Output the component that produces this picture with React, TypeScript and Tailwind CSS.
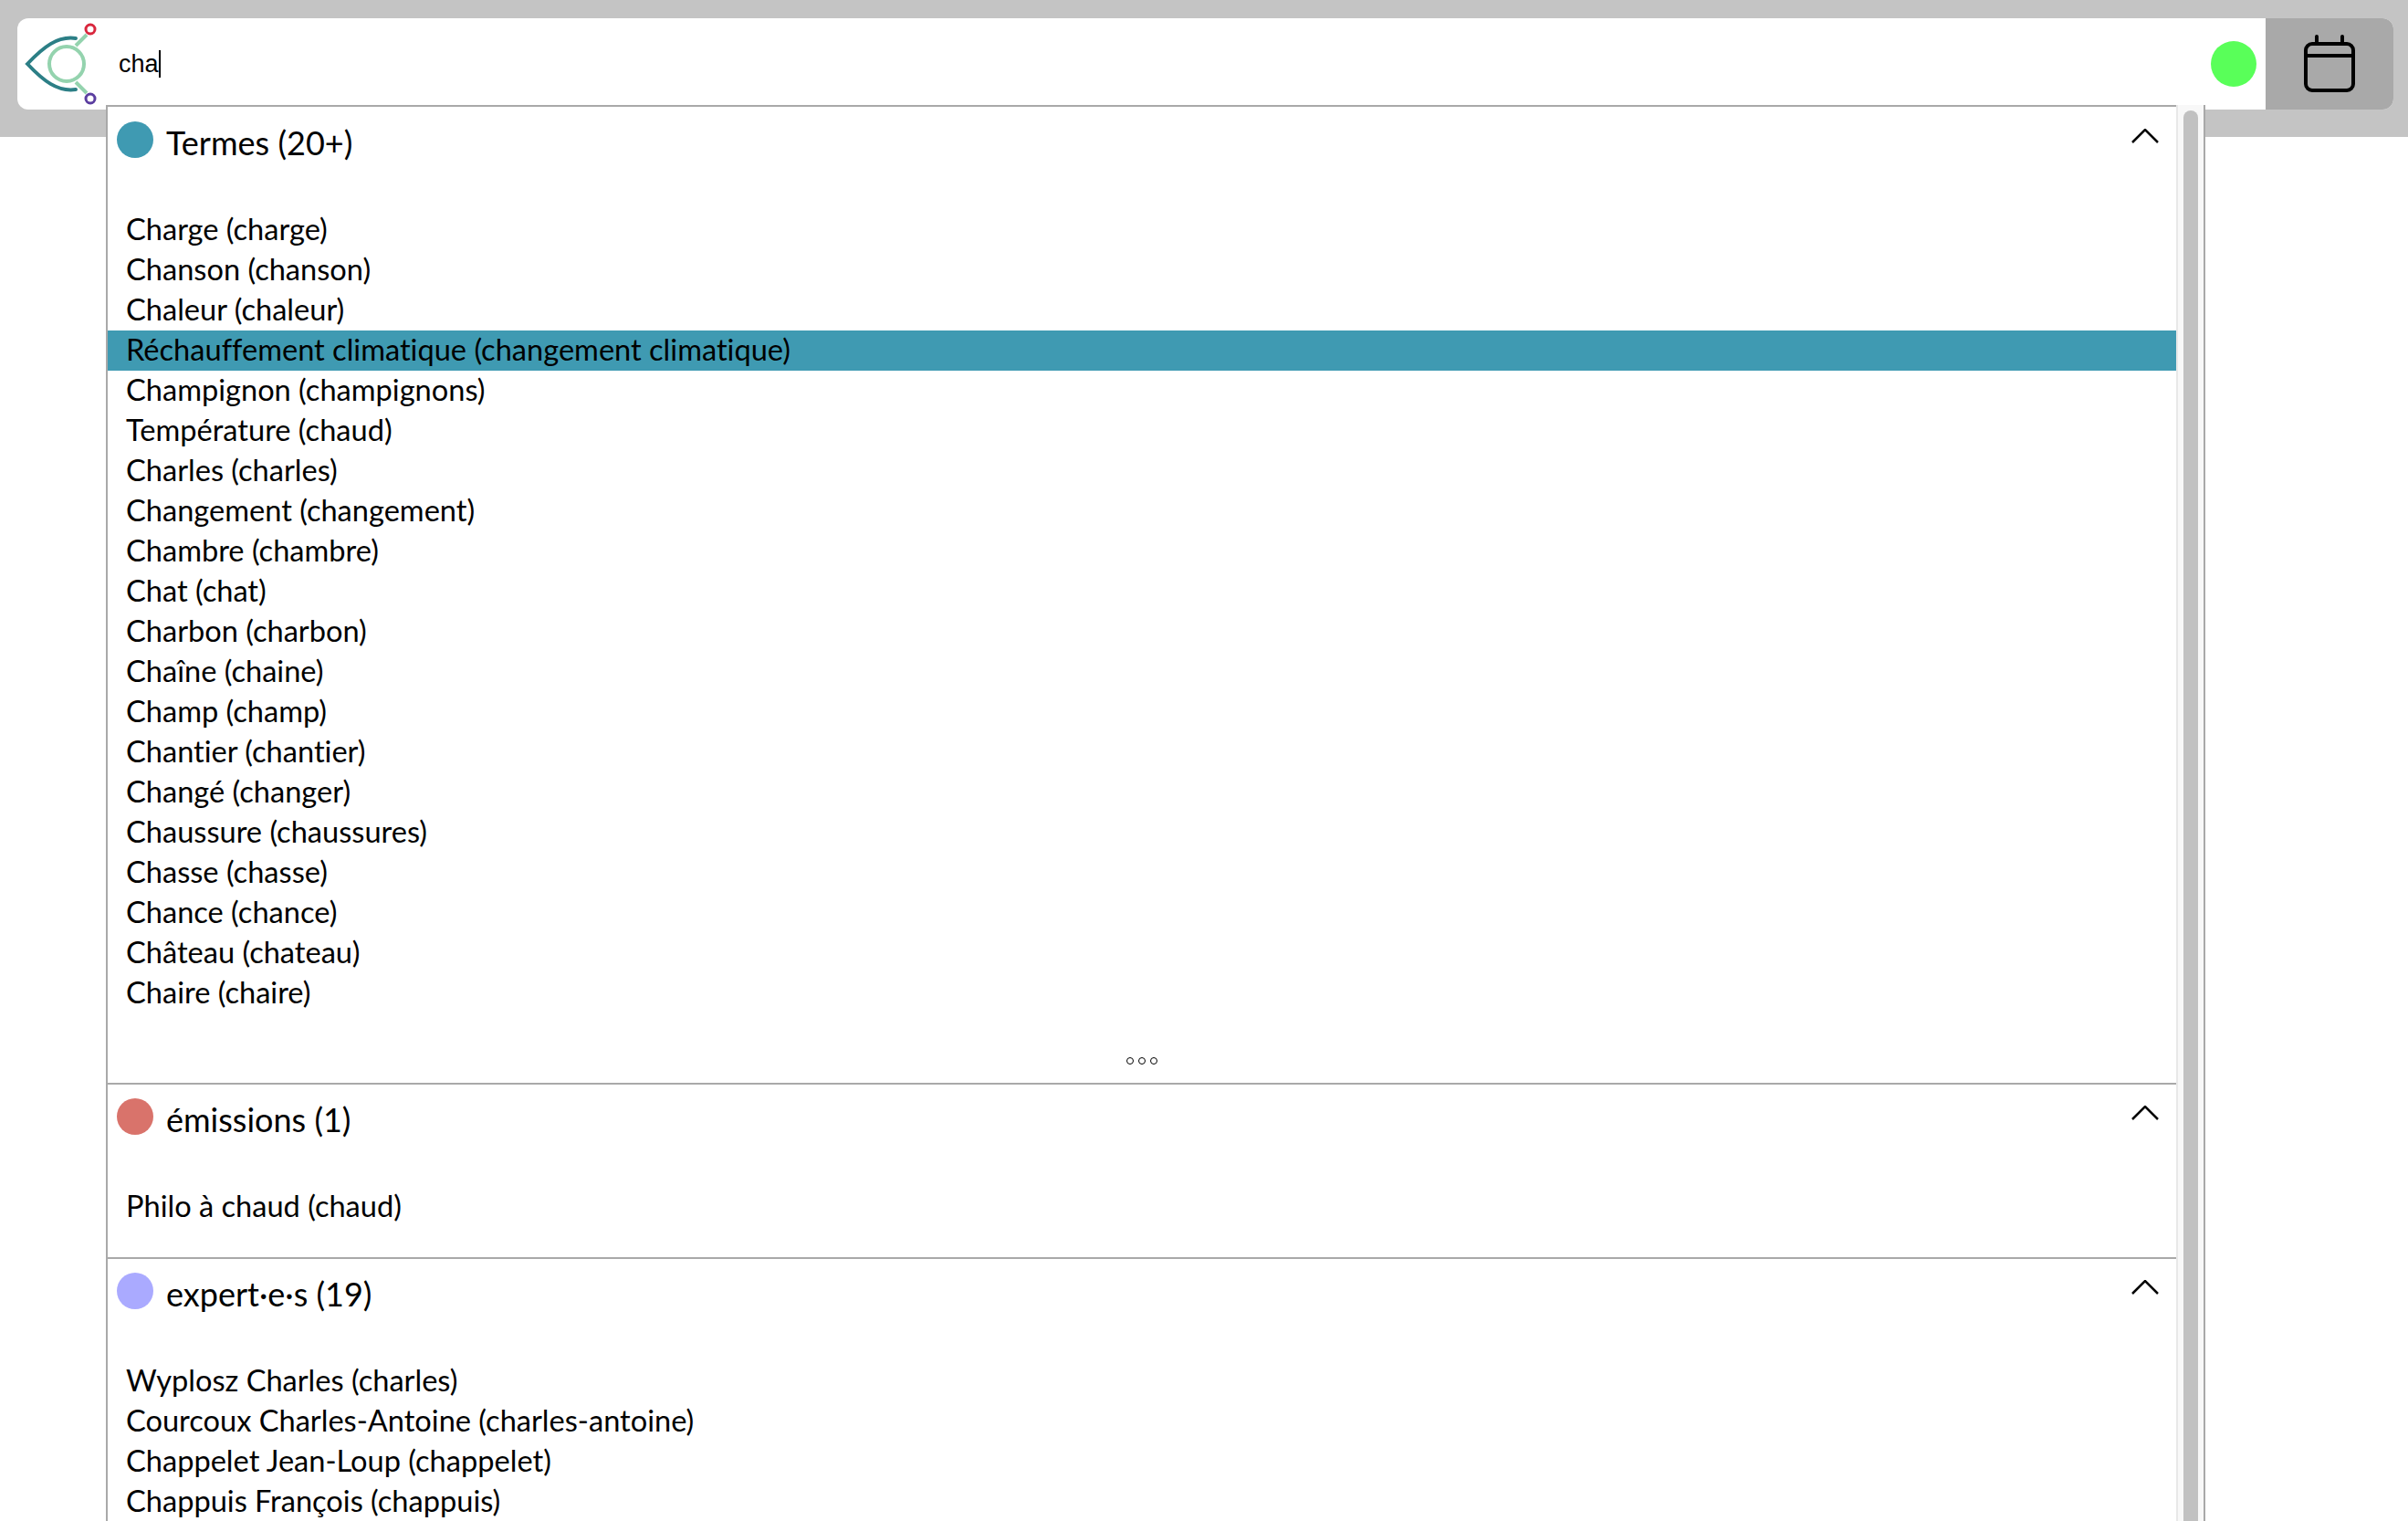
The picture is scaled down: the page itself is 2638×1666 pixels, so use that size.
const termes = [
  "Charge (charge)",
  "Chanson (chanson)",
  "Chaleur (chaleur)",
  "Réchauffement climatique (changement climatique)",
  "Champignon (champignons)",
  "Température (chaud)",
  "Charles (charles)",
  "Changement (changement)",
  "Chambre (chambre)",
  "Chat (chat)",
  "Charbon (charbon)",
  "Chaîne (chaine)",
  "Champ (champ)",
  "Chantier (chantier)",
  "Changé (changer)",
  "Chaussure (chaussures)",
  "Chasse (chasse)",
  "Chance (chance)",
  "Château (chateau)",
  "Chaire (chaire)",
];

const experts = [
  "Wyplosz Charles (charles)",
  "Courcoux Charles-Antoine (charles-antoine)",
  "Chappelet Jean-Loup (chappelet)",
  "Chappuis François (chappuis)",
];

function Logo() {
  return (
    <svg width="100" height="100" viewBox="0 0 100 100" fill="none" className="shrink-0">
      <path d="M64 22 C44 19 28 32 11 50 C28 68 44 81 64 78" stroke="#2c7f86" strokeWidth="4" strokeLinecap="round" />
      <path d="M64 30 L76 18 M64 70 L76 82" stroke="#94d3ae" strokeWidth="4" />
      <circle cx="54" cy="50" r="19" stroke="#94d3ae" strokeWidth="4" />
      <circle cx="80" cy="12" r="5" stroke="#d9273d" strokeWidth="3" fill="#fff" />
      <circle cx="80" cy="88" r="5" stroke="#5b3ea0" strokeWidth="3" fill="#fff" />
    </svg>
  );
}

function Chevron() {
  return (
    <svg width="30" height="16" viewBox="0 0 30 16" fill="none" className="mt-[23px] mr-[19px]">
      <path d="M1 15 L15 1 L29 15" stroke="#000" strokeWidth="2.5" />
    </svg>
  );
}

function Header({ color, label }: { color: string; label: string }) {
  return (
    <div className="flex h-[112px] items-start justify-between pl-[10px]">
      <div className="flex items-start gap-[14px] pt-[15px]">
        <div className={`h-[40px] w-[40px] rounded-full ${color}`} />
        <span className="text-[36px] leading-[47px]">{label}</span>
      </div>
      <Chevron />
    </div>
  );
}

function Row({ label, active }: { label: string; active?: boolean }) {
  return (
    <div className={`h-[44px] pl-[20px] text-[32.6px] leading-[42px] ${active ? "bg-[#3f9ab2]" : ""}`}>
      {label}
    </div>
  );
}

export default function App() {
  return (
    <div className="relative h-[1666px] overflow-hidden bg-white">
      {/* Barre du haut */}
      <div className="h-[150px] bg-[#c4c4c4] pt-[20px] pr-[16px] pl-[19px]">
        <div className="flex h-[100px] overflow-hidden rounded-[12px] bg-white">
          <div className="flex flex-1 items-center">
            <Logo />
            <span className="ml-[11px] font-['Liberation_Sans',sans-serif] text-[27px] text-black">cha</span>
            <span className="h-[30px] w-[2px] bg-black" />
            <div className="mr-[10px] ml-auto h-[50px] w-[50px] rounded-full bg-[#59ff59]" />
          </div>
          <div className="flex w-[140px] items-center justify-center bg-[#a9a9a9]">
            <svg width="60" height="66" viewBox="0 0 60 66" fill="none">
              <rect x="4" y="11" width="52" height="51" rx="7" stroke="#000" strokeWidth="4" />
              <path d="M4 24 H56" stroke="#000" strokeWidth="4" />
              <path d="M16 3 V11 M44 3 V11" stroke="#000" strokeWidth="4" strokeLinecap="round" />
            </svg>
          </div>
        </div>
      </div>

      {/* Liste des suggestions */}
      <div className="absolute top-[115px] left-[116px] flex h-[1551px] w-[2300px] border-t-2 border-l-2 border-[#a9a9a9] bg-white font-['Lato',sans-serif] text-black [font-variant-ligatures:none]">
        <div className="flex-1 pt-px">
          <Header color="bg-[#3f9ab2]" label="Termes (20+)" />
          {termes.map((t, i) => (
            <Row key={t} label={t} active={i === 3} />
          ))}
          <div className="flex h-[76px] items-start justify-center gap-[5px] pt-[48px]">
            <div className="h-[8px] w-[8px] rounded-full border border-black" />
            <div className="h-[8px] w-[8px] rounded-full border border-black" />
            <div className="h-[8px] w-[8px] rounded-full border border-black" />
          </div>

          <div className="border-t-2 border-[#a9a9a9]">
            <Header color="bg-[#d9736b]" label="émissions (1)" />
            <Row label="Philo à chaud (chaud)" />
            <div className="h-[33px]" />
          </div>

          <div className="border-t-2 border-[#a9a9a9]">
            <Header color="bg-[#aaaaff]" label="expert·e·s (19)" />
            {experts.map((t) => (
              <Row key={t} label={t} />
            ))}
          </div>
        </div>

        {/* Ascenseur */}
        <div className="-mt-[2px] w-[32px] border-r-2 border-l-2 border-r-[#a9a9a9] border-l-[#e8e8e8] bg-[#f8f8f8] pt-[6px] pl-[6px]">
          <div className="h-full w-[16px] rounded-t-[8px] bg-[#c1c1c1]" />
        </div>
      </div>
    </div>
  );
}
